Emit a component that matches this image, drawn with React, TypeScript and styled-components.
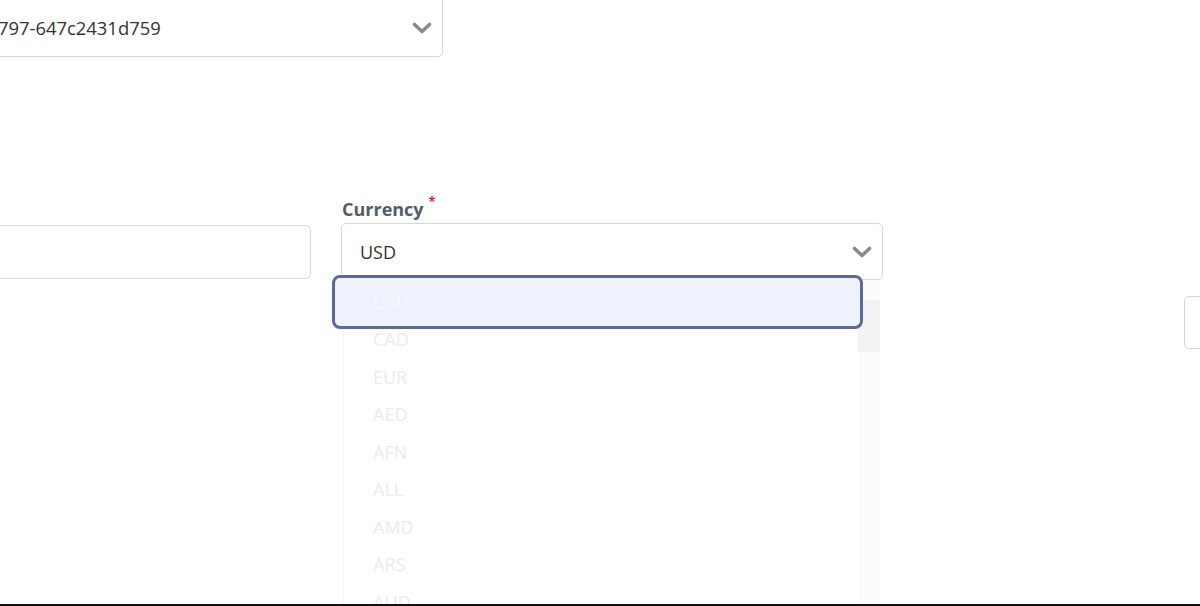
import React from "react";
import styled, { createGlobalStyle } from "styled-components";

const Global = createGlobalStyle`
  html, body { margin: 0; padding: 0; background: #fff; }
  body { font-family: "Open Sans", "Noto Sans", sans-serif; overflow: hidden; }
`;

const Page = styled.div`
  position: relative;
  height: 604px;
  overflow: hidden;
  border-bottom: 2px solid #111;
  background: #fff;
`;

const TopSelect = styled.div`
  box-sizing: border-box;
  margin-left: -240px;
  width: 683px;
  height: 57px;
  display: flex;
  align-items: center;
  padding: 0 10px 2px 16px;
  border: 1px solid #d6d6d6;
  border-top-color: transparent;
  border-radius: 0 0 5px 5px;
  color: #333;
  font-size: 18.4px;
`;

const ValueText = styled.div`
  flex: 1;
  display: flex;
  white-space: nowrap;
  overflow: hidden;
`;

const Hidden = styled.span`
  width: 221px;
  flex: none;
  overflow: hidden;
  text-align: right;
  direction: rtl;
`;

const Fields = styled.div`
  display: flex;
  align-items: flex-start;
  margin-top: 141px;
`;

const LeftInput = styled.div`
  box-sizing: border-box;
  flex: none;
  margin-left: -230px;
  margin-top: 27px;
  width: 541px;
  height: 54px;
  border: 1px solid #d6d6d6;
  border-radius: 5px;
`;

const FieldGroup = styled.div`
  position: relative;
  flex: none;
  margin-left: 30px;
  width: 542px;
`;

const Label = styled.label`
  display: flex;
  align-items: flex-start;
  height: 23px;
  margin-bottom: 2px;
  padding-left: 1px;
  font-size: 18px;
  font-weight: 700;
  color: #515d68;
  line-height: 22px;
`;

const Star = styled.span`
  color: #d9262b;
  font-size: 13px;
  line-height: 10px;
  margin-left: 5px;
  margin-top: -2px;
`;

const CurrencySelect = styled.div`
  box-sizing: border-box;
  height: 57px;
  display: flex;
  align-items: center;
  padding: 0 10px 0 18px;
  border: 1px solid #d6d6d6;
  border-radius: 5px;
  color: #333;
  font-size: 18px;
`;

const Grow = styled.div`
  flex: 1;
`;

const Menu = styled.div`
  position: absolute;
  left: 2px;
  top: 82px;
  width: 537px;
  height: 340px;
  box-sizing: border-box;
  background: #fff;
  border-left: 1px solid #f3f3f3;
  display: flex;
`;

const MenuList = styled.ul`
  list-style: none;
  margin: 0;
  padding: 3px 0 0;
  flex: 1;
`;

const Item = styled.li<{ $active?: boolean }>`
  position: relative;
  height: 37.5px;
  display: flex;
  align-items: center;
  padding-left: 29px;
  font-size: 18px;
  color: ${(p) => (p.$active ? "#f6f8fd" : "#ebebeb")};
  background: ${(p) => (p.$active ? "#edf2fd" : "transparent")};
`;

const FocusRing = styled.div`
  position: absolute;
  left: -12px;
  top: -8px;
  right: -5px;
  bottom: -8px;
  border: 3px solid #5d6a97;
  border-radius: 8px;
  background: #edf2fd;
  z-index: 0;
  pointer-events: none;
`;

const ItemText = styled.span`
  position: relative;
  z-index: 1;
`;

const Scrollbar = styled.div`
  width: 22px;
  background: #fcfcfc;
  display: flex;
  flex-direction: column;
`;

const Thumb = styled.div`
  margin-top: 20px;
  height: 52px;
  background: #f3f3f3;
`;

const RightInput = styled.div`
  box-sizing: border-box;
  margin-left: 301px;
  margin-top: 98px;
  width: 200px;
  height: 53px;
  flex: none;
  border: 1px solid #d6d6d6;
  border-radius: 5px;
`;

const Chevron = () => (
  <svg width="20" height="14" viewBox="0 0 20 14">
    <path d="M2.5 3.5 L10 10.5 L17.5 3.5" fill="none" stroke="#8a8a8a" strokeWidth="3.6" strokeLinecap="round" strokeLinejoin="round" />
  </svg>
);

const currencies = ["USD", "CAD", "EUR", "AED", "AFN", "ALL", "AMD", "ARS", "AUD"];

export default function App() {
  return (
    <Page>
      <Global />
      <TopSelect>
        <ValueText>
          <Hidden>e3b1c6a2-5f04-4c8e-b</Hidden>
          <span>797-647c2431d759</span>
        </ValueText>
        <Chevron />
      </TopSelect>
      <Fields>
        <LeftInput />
        <FieldGroup>
          <Label>
            Currency<Star>*</Star>
          </Label>
          <CurrencySelect>
            <Grow>USD</Grow>
            <Chevron />
          </CurrencySelect>
          <Menu>
            <MenuList>
              {currencies.map((c, i) => (
                <Item key={c} $active={i === 0}>
                  {i === 0 && <FocusRing />}
                  <ItemText>{c}</ItemText>
                </Item>
              ))}
            </MenuList>
            <Scrollbar>
              <Thumb />
            </Scrollbar>
          </Menu>
        </FieldGroup>
        <RightInput />
      </Fields>
    </Page>
  );
}
